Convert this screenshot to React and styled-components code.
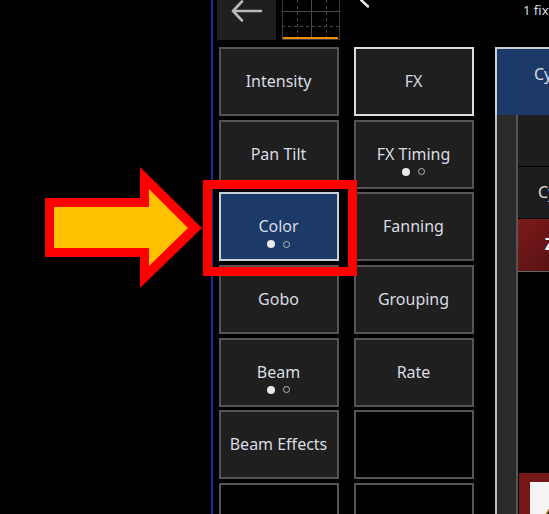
import React from 'react';
import styled, { createGlobalStyle } from 'styled-components';

const GlobalStyle = createGlobalStyle`
  html, body {
    margin: 0;
    padding: 0;
    background: #000;
  }
`;

const Page = styled.div`
  position: relative;
  width: 549px;
  height: 514px;
  overflow: hidden;
  background: #000;
  font-family: "Noto Sans", "Open Sans", sans-serif;
  color: #d8dce2;
  padding-left: 211px;
  box-sizing: border-box;
`;

const Console = styled.div`
  width: 400px;
  height: 514px;
  border-left: 2px solid #10309a;
  box-sizing: border-box;
  padding-left: 4px;
`;

const TopBar = styled.div`
  display: flex;
  align-items: flex-start;
  height: 47px;
`;

const BackButton = styled.div`
  flex-shrink: 0;
  width: 59px;
  height: 40px;
  background: #1f1f1f;
  display: flex;
  align-items: flex-start;
  justify-content: center;
  margin-right: 6px;
`;

const GraphThumb = styled.svg`
  flex-shrink: 0;
  display: block;
  width: 58px;
  height: 40px;
  margin-right: 20px;
`;

const CloseStroke = styled.svg`
  flex-shrink: 0;
  display: block;
  width: 9px;
  height: 8px;
  margin-right: 154px;
`;

const Status = styled.div`
  flex-shrink: 0;
  font-size: 13px;
  line-height: 20px;
  white-space: nowrap;
`;

const Main = styled.div`
  display: flex;
  align-items: flex-start;
`;

const AttributeGrid = styled.div`
  flex-shrink: 0;
  display: grid;
  grid-template-columns: 120px 120px;
  grid-auto-rows: 69px;
  column-gap: 15px;
  row-gap: 3.7px;
  margin-left: 2px;
  margin-right: 21px;
`;

const AttributeButton = styled.div`
  position: relative;
  box-sizing: border-box;
  display: flex;
  align-items: center;
  justify-content: center;
  font-size: 16px;
  padding: 0 1px 1px 0;
  border: 2px solid ${p => (p.$active ? '#c9d0da' : p.$selected ? '#dcdcdc' : '#555')};
  background: ${p => (p.$active ? '#1c3a68' : p.$empty ? '#000' : '#1f1f1f')};
`;

const Pager = styled.div`
  position: absolute;
  left: 0;
  right: 2px;
  bottom: 11px;
  display: flex;
  justify-content: center;
  align-items: center;
  gap: 8px;
`;

const PagerDot = styled.span`
  box-sizing: border-box;
  width: ${p => (p.$on ? 8 : 7)}px;
  height: ${p => (p.$on ? 8 : 7)}px;
  border-radius: 50%;
  background: ${p => (p.$on ? '#e8e8e8' : 'transparent')};
  border: ${p => (p.$on ? 'none' : '1.5px solid #b8b8b8')};
`;

const Panel = styled.div`
  width: 80px;
  flex-shrink: 0;
`;

const PanelTab = styled.div`
  box-sizing: border-box;
  height: 68px;
  background: #1c3a68;
  border-top: 2px solid #c9d0da;
  border-left: 2px solid #c9d0da;
  padding-left: 37px;
  font-size: 16px;
  line-height: 50px;
  white-space: nowrap;
`;

const PanelBody = styled.div`
  display: flex;
  height: 399px;
`;

const Scrollbar = styled.div`
  box-sizing: border-box;
  width: 23px;
  flex-shrink: 0;
  background: #2a2a2a;
  border-left: 2px solid #c0c0c0;
  border-right: 2px solid #555;
`;

const RowList = styled.div`
  flex: 1;
  display: flex;
  flex-direction: column;
`;

const Row = styled.div`
  box-sizing: border-box;
  flex-shrink: 0;
  height: 52px;
  background: #1d1d1d;
  border-bottom: 1px solid #000;
  padding-left: 20px;
  font-size: 16px;
  line-height: 50px;
  white-space: nowrap;
`;

const AlertRow = styled.div`
  box-sizing: border-box;
  flex-shrink: 0;
  height: 53px;
  background: linear-gradient(135deg, #7d1a1a, #4a0f0f);
  border-bottom: 1px solid #666;
  padding-left: 27px;
  color: #fff;
  font-size: 16px;
  font-weight: 700;
  line-height: 50px;
  white-space: nowrap;
`;

const Swatch = styled.div`
  box-sizing: border-box;
  flex-shrink: 0;
  position: relative;
  margin: 201px 0 0 1px;
  height: 42px;
  background: #f4f4f4;
  border-top: 9px solid #761818;
  border-left: 11px solid #761818;
`;

const SwatchMark = styled.svg`
  position: absolute;
  left: 15px;
  bottom: 0;
  width: 4px;
  height: 6px;
`;

const ArrowCallout = styled.svg`
  position: absolute;
  left: 45px;
  top: 167px;
  width: 157px;
  height: 121px;
`;

const HighlightFrame = styled.div`
  position: absolute;
  left: 203px;
  top: 180px;
  width: 154px;
  height: 96px;
  box-sizing: border-box;
  border: 9px solid #ff0000;
`;

const attributes = [
  { label: 'Intensity' },
  { label: 'FX', selected: true },
  { label: 'Pan Tilt' },
  { label: 'FX Timing', pager: true },
  { label: 'Color', pager: true, active: true },
  { label: 'Fanning' },
  { label: 'Gobo' },
  { label: 'Grouping' },
  { label: 'Beam', pager: true },
  { label: 'Rate' },
  { label: 'Beam Effects' },
  { empty: true },
  { empty: true },
  { empty: true },
];

const App = () => {
  return (
    <Page>
      <GlobalStyle />
      <Console>
        <TopBar>
          <BackButton>
            <svg width="32" height="24" viewBox="0 0 32 24" fill="none" stroke="#b8b8b8" strokeWidth="2.6" strokeLinecap="round">
              <path d="M2 11H30M2 11L11 1.5M2 11L11 20.5" />
            </svg>
          </BackButton>
          <GraphThumb viewBox="0 0 58 40" fill="none">
            <rect x="0.5" y="-2" width="57" height="41.5" stroke="#3d3d3d" />
            <path d="M29.5 0V38M0 11.5H58" stroke="#4a4a4a" />
            <path d="M15.5 0V38M44.5 0V38M0 26.5H58" stroke="#4a4a4a" strokeDasharray="3 3" />
            <path d="M1 38H56" stroke="#f08a00" strokeWidth="2" />
          </GraphThumb>
          <CloseStroke viewBox="0 0 9 8">
            <path d="M0 -1L8 6.5" stroke="#e8e8e8" strokeWidth="2.4" strokeLinecap="round" />
          </CloseStroke>
          <Status>1 fixture selected</Status>
        </TopBar>
        <Main>
          <AttributeGrid>
            {attributes.map((a, i) => (
              <AttributeButton key={i} $active={a.active} $selected={a.selected} $empty={a.empty}>
                {a.label}
                {a.pager && (
                  <Pager>
                    <PagerDot $on />
                    <PagerDot />
                  </Pager>
                )}
              </AttributeButton>
            ))}
          </AttributeGrid>
          <Panel>
            <PanelTab>Cyan</PanelTab>
            <PanelBody>
              <Scrollbar />
              <RowList>
                <Row />
                <Row>Cyan</Row>
                <AlertRow>Zero</AlertRow>
                <Swatch>
                  <SwatchMark viewBox="0 0 4 6">
                    <polygon points="4,0 0,6 4,6" fill="#111" />
                    <polygon points="4,0 0,6 1.5,6 4,2" fill="#d98a20" />
                  </SwatchMark>
                </Swatch>
              </RowList>
            </PanelBody>
          </Panel>
        </Main>
      </Console>
      <ArrowCallout viewBox="45 167 157 121">
        <polygon points="45,198 140,198 140,167 202,228 140,288 140,257 45,257" fill="#ff0000" />
        <polygon points="54,207 149,207 149,189 188,228 149,266 149,248 54,248" fill="#ffc000" />
      </ArrowCallout>
      <HighlightFrame />
    </Page>
  );
};

export default App;
